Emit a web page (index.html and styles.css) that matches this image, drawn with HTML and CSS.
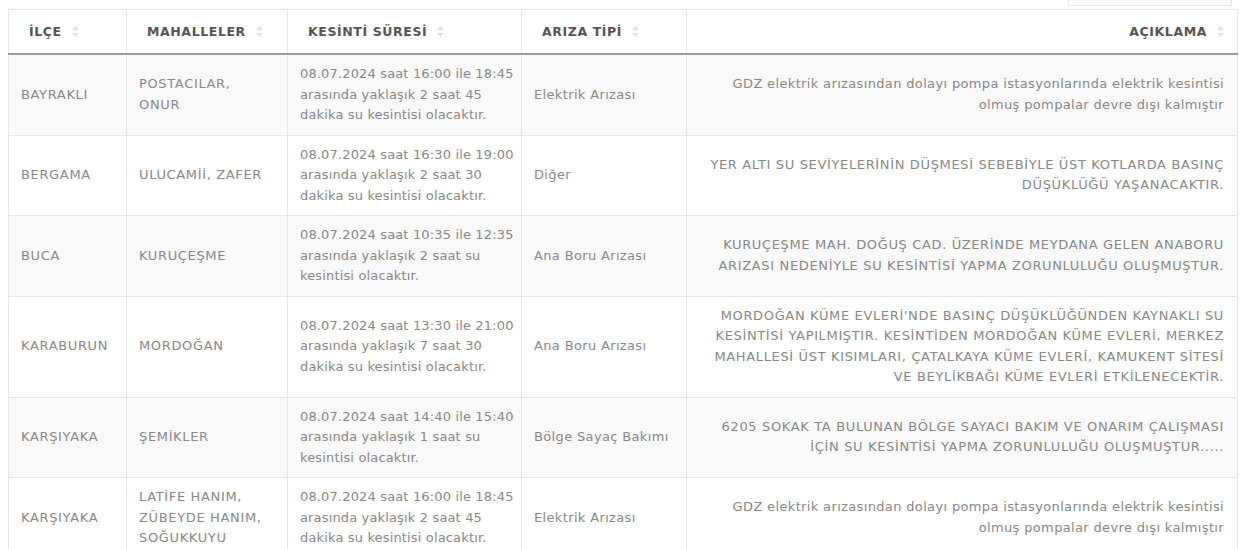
FILE: index.html
```html
<!DOCTYPE html>
<html lang="tr">
<head>
<meta charset="utf-8">
<title>Su Kesintileri</title>
<link rel="stylesheet" href="styles.css">
</head>
<body>
<div class="page">
  <div class="toolbar"><div class="search"></div></div>
  <table class="outages">
    <colgroup>
      <col class="c-ilce"><col class="c-mah"><col class="c-sure"><col class="c-tip"><col>
    </colgroup>
    <thead>
      <tr>
        <th><span class="th-in">İLÇE<svg class="sort" viewBox="0 0 7 11" width="7" height="11"><path d="M3.5 0 7 4H0Z"/><path d="M0 7h7l-3.5 4Z"/></svg></span></th>
        <th><span class="th-in">MAHALLELER<svg class="sort" viewBox="0 0 7 11" width="7" height="11"><path d="M3.5 0 7 4H0Z"/><path d="M0 7h7l-3.5 4Z"/></svg></span></th>
        <th><span class="th-in">KESİNTİ SÜRESİ<svg class="sort" viewBox="0 0 7 11" width="7" height="11"><path d="M3.5 0 7 4H0Z"/><path d="M0 7h7l-3.5 4Z"/></svg></span></th>
        <th><span class="th-in">ARIZA TİPİ<svg class="sort" viewBox="0 0 7 11" width="7" height="11"><path d="M3.5 0 7 4H0Z"/><path d="M0 7h7l-3.5 4Z"/></svg></span></th>
        <th class="right"><span class="th-in">AÇIKLAMA<svg class="sort" viewBox="0 0 7 11" width="7" height="11"><path d="M3.5 0 7 4H0Z"/><path d="M0 7h7l-3.5 4Z"/></svg></span></th>
      </tr>
    </thead>
    <tbody>
      <tr>
        <td class="caps">BAYRAKLI</td>
        <td class="caps">POSTACILAR,<br>ONUR</td>
        <td class="time">08.07.2024 saat 16:00 ile 18:45 arasında yaklaşık 2 saat 45 dakika su kesintisi olacaktır.</td>
        <td>Elektrik Arızası</td>
        <td class="right">GDZ elektrik arızasından dolayı pompa istasyonlarında elektrik kesintisi<br>olmuş pompalar devre dışı kalmıştır</td>
      </tr>
      <tr>
        <td class="caps">BERGAMA</td>
        <td class="caps">ULUCAMİİ, ZAFER</td>
        <td class="time">08.07.2024 saat 16:30 ile 19:00 arasında yaklaşık 2 saat 30 dakika su kesintisi olacaktır.</td>
        <td>Diğer</td>
        <td class="right caps">YER ALTI SU SEVİYELERİNİN DÜŞMESİ SEBEBİYLE ÜST KOTLARDA BASINÇ<br>DÜŞÜKLÜĞÜ YAŞANACAKTIR.</td>
      </tr>
      <tr>
        <td class="caps">BUCA</td>
        <td class="caps">KURUÇEŞME</td>
        <td class="time">08.07.2024 saat 10:35 ile 12:35 arasında yaklaşık 2 saat su kesintisi olacaktır.</td>
        <td>Ana Boru Arızası</td>
        <td class="right caps">KURUÇEŞME MAH. DOĞUŞ CAD. ÜZERİNDE MEYDANA GELEN ANABORU<br>ARIZASI NEDENİYLE SU KESİNTİSİ YAPMA ZORUNLULUĞU OLUŞMUŞTUR.</td>
      </tr>
      <tr>
        <td class="caps">KARABURUN</td>
        <td class="caps">MORDOĞAN</td>
        <td class="time">08.07.2024 saat 13:30 ile 21:00 arasında yaklaşık 7 saat 30 dakika su kesintisi olacaktır.</td>
        <td>Ana Boru Arızası</td>
        <td class="right caps">MORDOĞAN KÜME EVLERİ'NDE BASINÇ DÜŞÜKLÜĞÜNDEN KAYNAKLI SU<br>KESİNTİSİ YAPILMIŞTIR. KESİNTİDEN MORDOĞAN KÜME EVLERİ, MERKEZ<br>MAHALLESİ ÜST KISIMLARI, ÇATALKAYA KÜME EVLERİ, KAMUKENT SİTESİ<br>VE BEYLİKBAĞI KÜME EVLERİ ETKİLENECEKTİR.</td>
      </tr>
      <tr>
        <td class="caps">KARŞIYAKA</td>
        <td class="caps">ŞEMİKLER</td>
        <td class="time">08.07.2024 saat 14:40 ile 15:40 arasında yaklaşık 1 saat su kesintisi olacaktır.</td>
        <td>Bölge Sayaç Bakımı</td>
        <td class="right caps">6205 SOKAK TA BULUNAN BÖLGE SAYACI BAKIM VE ONARIM ÇALIŞMASI<br>İÇİN SU KESİNTİSİ YAPMA ZORUNLULUĞU OLUŞMUŞTUR.....</td>
      </tr>
      <tr>
        <td class="caps">KARŞIYAKA</td>
        <td class="caps">LATİFE HANIM,<br>ZÜBEYDE HANIM,<br>SOĞUKKUYU</td>
        <td class="time">08.07.2024 saat 16:00 ile 18:45 arasında yaklaşık 2 saat 45 dakika su kesintisi olacaktır.</td>
        <td>Elektrik Arızası</td>
        <td class="right">GDZ elektrik arızasından dolayı pompa istasyonlarında elektrik kesintisi<br>olmuş pompalar devre dışı kalmıştır</td>
      </tr>
    </tbody>
  </table>
</div>
</body>
</html>
```
FILE: styles.css
```css
html, body {
  margin: 0;
  padding: 0;
  background: #fff;
}

.page {
  padding: 0 7px 0 8px;
  font-family: "DejaVu Sans", "Liberation Sans", sans-serif;
}

.toolbar {
  display: flex;
  justify-content: flex-end;
  height: 6px;
  padding-right: 6px;
}

.search {
  width: 162px;
  height: 5px;
  border: 1px solid #e8e8e8;
  border-top: none;
}

.outages {
  margin-top: 3px;
  width: 1230px;
  border-collapse: collapse;
  table-layout: fixed;
  border: 1px solid #e6e6e6;
}

.c-ilce { width: 118px; }
.c-mah { width: 161px; }
.c-sure { width: 234px; }
.c-tip { width: 165px; }

.outages th {
  height: 43px;
  padding: 0 18px 0 20px;
  text-align: left;
  font-size: 12.5px;
  font-weight: bold;
  letter-spacing: 0.6px;
  color: #555;
  border: 1px solid #e8e8e8;
  border-bottom: 2px solid #9c9c9c;
  background: #fff;
  white-space: nowrap;
}

.th-in {
  display: inline-flex;
  align-items: center;
  gap: 10px;
}

.sort {
  fill: #e0e0e0;
}

.outages td {
  padding: 9px 12px;
  font-size: 13px;
  line-height: 20.5px;
  letter-spacing: 0.35px;
  color: #888;
  vertical-align: middle;
  border: 1px solid #e6e6e6;
}

.outages td.caps {
  letter-spacing: 0.65px;
}

.outages td.time {
  letter-spacing: 0.15px;
  padding-right: 6px;
}

.outages tbody tr:nth-child(odd) td {
  background: #f9f9f9;
}

.outages tbody tr:nth-child(even) td {
  background: #fff;
}

.outages .right {
  text-align: right;
  padding-right: 13px;
}
```
